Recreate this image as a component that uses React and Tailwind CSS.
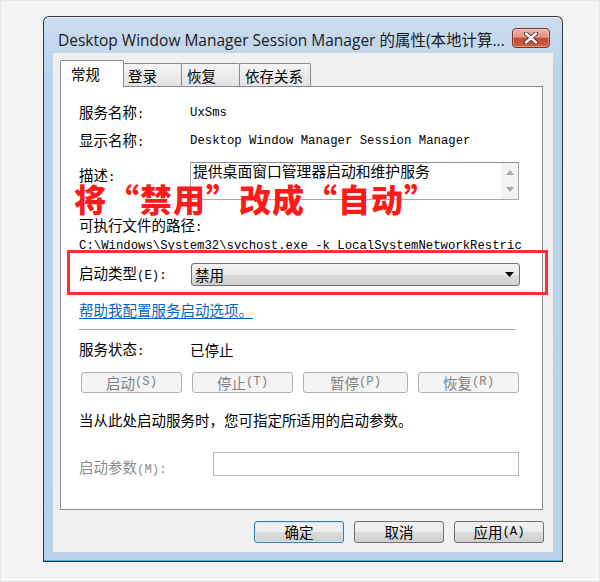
import React from "react";

const M = ({ children }) => (
  <span className="font-['Liberation_Mono',monospace] text-[12.3px]">{children}</span>
);

function Btn({ children, w = "w-[90px]", primary = false }) {
  return (
    <div
      className={`${w} h-[22px] rounded-[3px] border flex items-center justify-center leading-[20px] text-black bg-[linear-gradient(to_bottom,#f2f2f2_0%,#ebebeb_50%,#dddddd_51%,#cfcfcf_100%)] ${
        primary ? "border-[#3c7fb1] shadow-[inset_0_0_0_1px_#c4e5f6]" : "border-[#707070]"
      }`}
    >
      {children}
    </div>
  );
}

function DisBtn({ children, w }) {
  return (
    <div
      className={`${w} h-[21px] rounded-[3px] border border-[#adb2b5] bg-[#f4f4f4] flex items-center justify-center leading-[19px] text-[#838383]`}
    >
      {children}
    </div>
  );
}

export default function App() {
  return (
    <div className="relative w-[600px] h-[582px] bg-[#ebebeb] p-[2px] font-['Noto_Sans_CJK_SC',sans-serif] text-[14.5px] text-black">
      <div className="w-full h-full border border-white bg-[#f2f2f2] pl-[40px] pt-[13px]">
        {/* window */}
        <div className="w-[520px] h-[546px] border border-[#3a3a3a] border-b-[#1e2a30] rounded-t-[6px] bg-[linear-gradient(to_bottom,#cadcef_0%,#bcd2ea_60px,#b9d1ea_100%)] shadow-[inset_0_-1px_0_#3fb6da,inset_0_1px_0_rgba(255,255,255,0.6)] flex flex-col">
          {/* title bar */}
          <div className="h-[36px] flex items-start pl-[14px] pr-[12px]">
            <span className="mt-[13px] leading-[20px] text-[15.5px] text-[#1b1b1b] whitespace-nowrap font-['Open_Sans','Noto_Sans_CJK_SC',sans-serif]">
              Desktop Window Manager Session Manager 的属性(本地计算...
            </span>
            <div className="ml-auto mt-[11px] w-[38px] h-[20px] rounded-[4px] border border-[#7a3327] bg-[linear-gradient(to_bottom,#eab3a7_0%,#df9586_45%,#c9462f_52%,#d3614b_100%)] shadow-[inset_0_0_0_1px_rgba(255,255,255,0.35)] flex items-center justify-center">
              <svg width="16" height="12" viewBox="0 0 16 12">
                <path d="M3 1.5 L13 10.5 M13 1.5 L3 10.5" stroke="#5c2a22" strokeWidth="4.2" strokeLinecap="round" />
                <path d="M3 1.5 L13 10.5 M13 1.5 L3 10.5" stroke="#ffffff" strokeWidth="2.4" strokeLinecap="round" />
              </svg>
            </div>
          </div>

          {/* client */}
          <div className="mx-[9px] w-[500px] h-[499px] bg-[#f0f0f0] pt-[7px] pl-[7px] pr-[10px] flex flex-col">
            {/* tabs */}
            <div className="h-[26px] flex items-end">
              <div className="relative z-10 w-[64px] h-[27px] -mb-px bg-white border border-b-0 border-[#898c95] rounded-t-[2px] pl-[10px] pt-[3px] leading-[20px] text-[14.5px]">
                常规
              </div>
              <div className="w-[59px] h-[23px] -ml-px bg-[linear-gradient(to_bottom,#f5f5f5,#e3e3e3)] border border-b-0 border-[#898c95] rounded-t-[2px] pl-[4px] pt-[2px] leading-[20px] text-[14.5px]">
                登录
              </div>
              <div className="w-[59px] h-[23px] -ml-px bg-[linear-gradient(to_bottom,#f5f5f5,#e3e3e3)] border border-b-0 border-[#898c95] rounded-t-[2px] pl-[5px] pt-[2px] leading-[20px] text-[14.5px]">
                恢复
              </div>
              <div className="w-[72px] h-[23px] -ml-px bg-[linear-gradient(to_bottom,#f5f5f5,#e3e3e3)] border border-b-0 border-[#898c95] rounded-t-[2px] pl-[5px] pt-[2px] leading-[20px] text-[14.5px]">
                依存关系
              </div>
            </div>

            {/* panel */}
            <div className="w-[483px] h-[424px] bg-white border border-[#898c95] pl-[18px] flex flex-col">
              <div className="mt-[16px] h-[20px] flex items-center leading-[20px]">
                <div className="w-[111px]">服务名称<M>:</M></div>
                <M>UxSms</M>
              </div>
              <div className="mt-[8px] h-[20px] flex items-center leading-[20px]">
                <div className="w-[111px]">显示名称<M>:</M></div>
                <M>Desktop Window Manager Session Manager</M>
              </div>
              <div className="mt-[11px] h-[38px] flex items-start">
                <div className="w-[111px] mt-[3px] leading-[20px]">描述<M>:</M></div>
                <div className="w-[329px] h-[38px] border border-[#a5a8ae] border-t-[#8c8f94] flex">
                  <div className="flex-1 pl-[2px] leading-[16px] text-[14.8px]">提供桌面窗口管理器启动和维护服务</div>
                  <div className="w-[17px] h-full bg-[#f3f3f3] flex flex-col items-center justify-between py-[7px]">
                    <svg width="8" height="5" viewBox="0 0 8 5"><path d="M0 5 L4 0 L8 5 Z" fill="#a8a8a8" /></svg>
                    <svg width="8" height="5" viewBox="0 0 8 5"><path d="M0 0 L8 0 L4 5 Z" fill="#a8a8a8" /></svg>
                  </div>
                </div>
              </div>
              <div className="mt-[15px] h-[20px] leading-[20px]">
                可执行文件的路径<M>:</M>
              </div>
              <div className="h-[16px] w-[442px] overflow-hidden whitespace-nowrap leading-[16px]">
                <M>C:\Windows\System32\svchost.exe -k LocalSystemNetworkRestricted</M>
              </div>
              <div className="mt-[12px] h-[23px] flex items-center">
                <div className="w-[112px] leading-[20px]">启动类型<M>(E):</M></div>
                <div className="w-[329px] h-[23px] rounded-[3px] border border-[#707070] bg-[linear-gradient(to_bottom,#f2f2f2_0%,#ebebeb_50%,#dddddd_51%,#cfcfcf_100%)] flex items-center pl-[3px] pr-[5px] leading-[20px]">
                  <span>禁用</span>
                  <svg className="ml-auto" width="9" height="5" viewBox="0 0 9 5"><path d="M0 0 L9 0 L4.5 5 Z" fill="#000" /></svg>
                </div>
              </div>
              <div className="mt-[14px] h-[20px] leading-[20px]">
                <span className="text-[#0066cc] underline underline-offset-2">帮助我配置服务启动选项。</span>
              </div>
              <div className="mt-[9px] h-px w-[436px] bg-[#a0a0a0]" />
              <div className="mt-[10px] h-[20px] flex items-center leading-[20px]">
                <div className="w-[111px]">服务状态<M>:</M></div>
                <span>已停止</span>
              </div>
              <div className="mt-[12px] ml-[2px] flex gap-[10px]">
                <DisBtn w="w-[101px]">启动<M>(S)</M></DisBtn>
                <DisBtn w="w-[101px]">停止<M>(T)</M></DisBtn>
                <DisBtn w="w-[105px]">暂停<M>(P)</M></DisBtn>
                <DisBtn w="w-[101px]">恢复<M>(R)</M></DisBtn>
              </div>
              <div className="mt-[17px] h-[20px] leading-[20px]">
                当从此处启动服务时，您可指定所适用的启动参数。
              </div>
              <div className="mt-[22px] h-[24px] flex items-start">
                <div className="w-[134px] mt-[5px] leading-[20px] text-[#8d8d8d]">启动参数<M>(M):</M></div>
                <div className="w-[306px] h-[24px] border border-[#b5b8be] bg-white" />
              </div>
            </div>

            {/* bottom buttons */}
            <div className="mt-[11px] flex justify-end gap-[10px] -mr-px">
              <Btn primary>确定</Btn>
              <Btn>取消</Btn>
              <Btn>应用<M> (A)</M></Btn>
            </div>
          </div>
        </div>
      </div>

      {/* annotations */}
      <div className="absolute left-[74px] top-[182px] leading-[32px] text-[32px] tracking-[1px] font-black text-[#ff1a1a] whitespace-nowrap font-['Noto_Sans_CJK_SC',sans-serif]">
        将“禁用”改成“自动”
      </div>
      <div className="absolute left-[67px] top-[250px] w-[481px] h-[45px] border-[3px] border-[#ff3030]" />
    </div>
  );
}
